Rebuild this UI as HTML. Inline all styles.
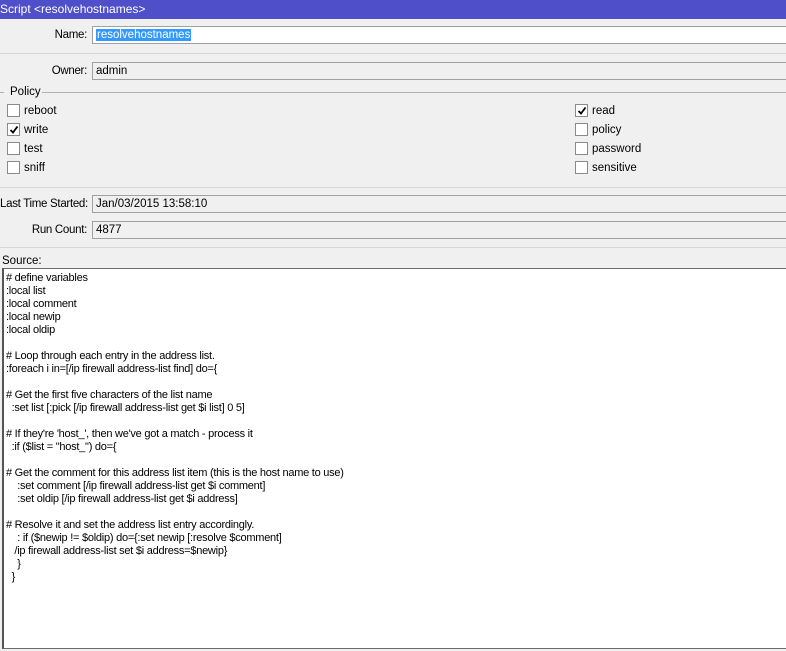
<!DOCTYPE html>
<html><head><style>
*{margin:0;padding:0;box-sizing:border-box}
body{width:786px;height:651px;background:#f0f0f0;font-family:"Liberation Sans",sans-serif;font-size:11.5px;color:#000;position:relative;overflow:hidden}
.a{position:absolute;white-space:nowrap}
.title{left:0;top:0;width:786px;height:19px;background:#4f4fc9;color:#fff;padding-left:0;line-height:18px;font-size:12px}
.fld{position:absolute;left:92px;width:700px;height:18px;border:1px solid #a0a0a0;border-right:none;background:#f0f0f0;padding-left:3px;line-height:16px;white-space:nowrap}
.lbl{position:absolute;text-align:right;width:87px;left:0;line-height:18px;white-space:nowrap;letter-spacing:-0.3px}
.sep{position:absolute;left:0;width:786px;height:0;border-top:1px solid #d8d8d8}
.cb{position:absolute;width:13px;height:13px;border:1px solid #8a8a8a;background:#fff}
.cb svg{position:absolute;left:1px;top:1px}
.cl{position:absolute;line-height:14px}
pre{position:absolute;left:2px;top:268px;width:786px;height:381px;background:#fff;border:1px solid #6a6a6a;border-left:2px solid #555;border-right:none;font-family:"Liberation Sans",sans-serif;font-size:11px;line-height:13px;padding:3px 0 0 2px;letter-spacing:-0.25px}
</style></head><body>
<div class="a title">Script &lt;resolvehostnames&gt;</div>
<div class="lbl" style="top:26px">Name:</div>
<div class="fld" style="top:26px;background:#fff"><span style="background:#3399ff;color:#fff;padding:0 1px">resolvehostnames</span></div>
<div class="sep" style="top:53px"></div>
<div class="lbl" style="top:62px">Owner:</div>
<div class="fld" style="top:62px">admin</div>
<div class="sep" style="top:92px;left:0;width:4px;border-color:#b0b0b0"></div>
<div class="a" style="left:10px;top:85px;line-height:14px">Policy</div>
<div class="sep" style="top:92px;left:42px;width:744px;border-color:#b0b0b0"></div>

<div class="cb" style="left:7px;top:104px"></div><div class="cl" style="left:24px;top:104px">reboot</div>
<div class="cb" style="left:7px;top:123px"><svg width="10" height="10"><path d="M1.5 5 L4 7.5 L8.5 1.5" stroke="#000" stroke-width="1.8" fill="none"/></svg></div><div class="cl" style="left:24px;top:123px">write</div>
<div class="cb" style="left:7px;top:142px"></div><div class="cl" style="left:24px;top:142px">test</div>
<div class="cb" style="left:7px;top:161px"></div><div class="cl" style="left:24px;top:161px">sniff</div>

<div class="cb" style="left:575px;top:104px"><svg width="10" height="10"><path d="M1.5 5 L4 7.5 L8.5 1.5" stroke="#000" stroke-width="1.8" fill="none"/></svg></div><div class="cl" style="left:592px;top:104px">read</div>
<div class="cb" style="left:575px;top:123px"></div><div class="cl" style="left:592px;top:123px">policy</div>
<div class="cb" style="left:575px;top:142px"></div><div class="cl" style="left:592px;top:142px">password</div>
<div class="cb" style="left:575px;top:161px"></div><div class="cl" style="left:592px;top:161px">sensitive</div>

<div class="sep" style="top:187px"></div>
<div class="lbl" style="top:195px;left:0">Last Time Started:</div>
<div class="fld" style="top:195px">Jan/03/2015 13:58:10</div>
<div class="lbl" style="top:221px">Run Count:</div>
<div class="fld" style="top:221px">4877</div>
<div class="sep" style="top:247px"></div>
<div class="a" style="left:2px;top:255px;line-height:13px">Source:</div>
<pre># define variables
:local list
:local comment
:local newip
:local oldip

# Loop through each entry in the address list.
:foreach i in=[/ip firewall address-list find] do={

# Get the first five characters of the list name
  :set list [:pick [/ip firewall address-list get $i list] 0 5]

# If they're 'host_', then we've got a match - process it
  :if ($list = "host_") do={

# Get the comment for this address list item (this is the host name to use)
    :set comment [/ip firewall address-list get $i comment]
    :set oldip [/ip firewall address-list get $i address]

# Resolve it and set the address list entry accordingly.
    : if ($newip != $oldip) do={:set newip [:resolve $comment]
   /ip firewall address-list set $i address=$newip}
    }
  }
</pre>
</body></html>
